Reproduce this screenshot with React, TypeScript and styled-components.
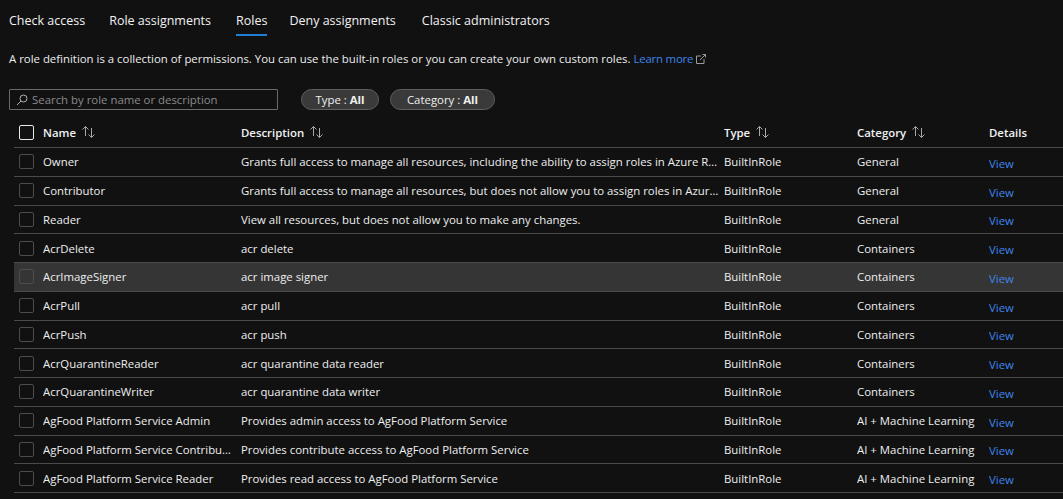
import React from 'react';
import styled, { createGlobalStyle } from 'styled-components';

const GlobalStyle = createGlobalStyle`
  html, body {
    margin: 0;
    height: 100%;
    background: #111112;
    overflow: hidden;
  }
  body {
    font-family: 'Open Sans', 'Noto Sans', sans-serif;
    font-size: 12px;
    color: #f0f0f0;
  }
`;

const roles = [
  { name: 'Owner', desc: 'Grants full access to manage all resources, including the ability to assign roles in Azure RBAC.', cat: 'General' },
  { name: 'Contributor', desc: 'Grants full access to manage all resources, but does not allow you to assign roles in Azure RBAC.', cat: 'General' },
  { name: 'Reader', desc: 'View all resources, but does not allow you to make any changes.', cat: 'General' },
  { name: 'AcrDelete', desc: 'acr delete', cat: 'Containers' },
  { name: 'AcrImageSigner', desc: 'acr image signer', cat: 'Containers', hover: true },
  { name: 'AcrPull', desc: 'acr pull', cat: 'Containers' },
  { name: 'AcrPush', desc: 'acr push', cat: 'Containers' },
  { name: 'AcrQuarantineReader', desc: 'acr quarantine data reader', cat: 'Containers' },
  { name: 'AcrQuarantineWriter', desc: 'acr quarantine data writer', cat: 'Containers' },
  { name: 'AgFood Platform Service Admin', desc: 'Provides admin access to AgFood Platform Service', cat: 'AI + Machine Learning' },
  { name: 'AgFood Platform Service Contributor', desc: 'Provides contribute access to AgFood Platform Service', cat: 'AI + Machine Learning' },
  { name: 'AgFood Platform Service Reader', desc: 'Provides read access to AgFood Platform Service', cat: 'AI + Machine Learning' },
];

const tabs = ['Check access', 'Role assignments', 'Roles', 'Deny assignments', 'Classic administrators'];

function SortIcon() {
  return (
    <SortSvg width="15" height="12" viewBox="0 0 15 12" fill="none" stroke="#a8a8a8" strokeWidth="1">
      <path d="M4.5 10V0.500M1.5 3.500l3-3 3 3" />
      <path d="M10.5 2v9.500M7.500 8.500l3 3 3-3" />
    </SortSvg>
  );
}

function App() {
  return (
    <Page>
      <GlobalStyle />
      <Tabs>
        {tabs.map((t) => (
          <Tab key={t} $active={t === 'Roles'}>{t}</Tab>
        ))}
      </Tabs>
      <Intro>
        A role definition is a collection of permissions. You can use the built-in roles or you can create your own custom roles.{' '}
        <LearnLink>Learn more</LearnLink>
        <ExternalIcon width="10" height="10" viewBox="0 0 10 10" fill="none" stroke="#9a9a9a" strokeWidth="1">
          <path d="M5 2H.5v7.500H8V5M4 6l5.500-5.500M6.500.5h3v3" />
        </ExternalIcon>
      </Intro>
      <Filters>
        <SearchBox>
          <svg width="12" height="12" viewBox="0 0 12 12" fill="none" stroke="#b0b0b0" strokeWidth="1">
            <circle cx="7.500" cy="4.500" r="3.500" />
            <path d="M5 7l-4 4" />
          </svg>
          <SearchText>Search by role name or description</SearchText>
        </SearchBox>
        <Pills>
          <Pill $width={78}>Type : <b>All</b></Pill>
          <Pill $width={105}>Category : <b>All</b></Pill>
        </Pills>
      </Filters>
      <Table>
        <HeaderRow>
          <CheckCell><Check $strong /></CheckCell>
          <HeadCell>Name <SortIcon /></HeadCell>
          <HeadCell>Description <SortIcon /></HeadCell>
          <HeadCell>Type <SortIcon /></HeadCell>
          <HeadCell>Category <SortIcon /></HeadCell>
          <HeadCell>Details</HeadCell>
        </HeaderRow>
        {roles.map((r) => (
          <Row key={r.name} $hover={r.hover}>
            <CheckCell><Check /></CheckCell>
            <Cell>{r.name}</Cell>
            <DescCell>{r.desc}</DescCell>
            <Cell>BuiltInRole</Cell>
            <Cell>{r.cat}</Cell>
            <ViewCell>View</ViewCell>
          </Row>
        ))}
      </Table>
    </Page>
  );
}

const Page = styled.div`
  width: 1063px;
  height: 499px;
  overflow: hidden;
  padding-top: 9px;
  box-sizing: border-box;
`;
const Tabs = styled.div`
  display: flex;
  gap: 24px;
  padding-left: 9px;
  height: 27px;
  & > :nth-child(3) { margin-left: 1px; }
  & > :nth-child(4) { margin-left: -2px; }
  & > :nth-child(5) { margin-left: 2px; }
`;
const Tab = styled.div<{ $active?: boolean }>`
  height: 27px;
  box-sizing: border-box;
  padding-top: 3px;
  font-size: 12.500px;
  line-height: 18px;
  color: #f2f2f2;
  border-bottom: 2px solid ${(p) => (p.$active ? '#1f7fd0' : 'transparent')};
`;
const Intro = styled.div`
  margin-top: 14px;
  padding-left: 9px;
  line-height: 18px;
  height: 18px;
  font-size: 11.400px;
  white-space: nowrap;
  color: #ececec;
`;
const LearnLink = styled.span`
  color: #3f85ea;
  letter-spacing: -0.2px;
`;
const ExternalIcon = styled.svg`
  margin-left: 3px;
  vertical-align: -1px;
`;
const Filters = styled.div`
  display: flex;
  align-items: center;
  margin-top: 21px;
  padding-left: 9px;
`;
const SearchBox = styled.div`
  width: 269px;
  height: 21px;
  box-sizing: border-box;
  display: flex;
  align-items: center;
  gap: 4px;
  padding-left: 6px;
  border: 1px solid #6a6a6a;
  border-radius: 1px;
`;
const SearchText = styled.span`
  color: #8a8a8a;
  font-size: 11.400px;
`;
const Pills = styled.div`
  display: flex;
  gap: 11px;
  margin-left: 23px;
`;
const Pill = styled.div<{ $width: number }>`
  width: ${(p) => p.$width}px;
  height: 21px;
  box-sizing: border-box;
  display: flex;
  align-items: center;
  justify-content: center;
  gap: 3px;
  background: #3a3a3a;
  border: 1px solid #5f5f5f;
  border-radius: 11px;
  font-size: 11.400px;
  b { font-weight: 700; }
`;
const Table = styled.div`
  margin: 8px 0 0 14px;
`;
const columns = `grid-template-columns: 29px 198px 483px 133px 132px 1fr;`;
const HeaderRow = styled.div`
  display: grid;
  ${columns}
  align-items: center;
  height: 30px;
  padding-bottom: 1px;
  border-bottom: 1px solid #4a4a4a;
  box-sizing: border-box;
`;
const Row = styled.div<{ $hover?: boolean }>`
  display: grid;
  ${columns}
  align-items: center;
  height: 28.750px;
  box-sizing: border-box;
  border-bottom: 1px solid #4a4a4a;
  background: ${(p) => (p.$hover ? '#353535' : 'transparent')};
`;
const CheckCell = styled.div`
  padding-left: 5px;
  display: flex;
  align-items: center;
`;
const Check = styled.div<{ $strong?: boolean }>`
  width: 15px;
  height: 15px;
  box-sizing: border-box;
  border: 1px solid ${(p) => (p.$strong ? '#e8e8e8' : '#4c4c4c')};
  border-radius: 2px;
`;
const Cell = styled.div`
  padding-right: 8px;
  font-size: 11.400px;
  white-space: nowrap;
  overflow: hidden;
  text-overflow: ellipsis;
  color: #eeeeee;
`;
const DescCell = styled(Cell)`
  padding-right: 5px;
`;
const HeadCell = styled(Cell)`
  font-weight: 600;
  color: #f2f2f2;
  display: flex;
  align-items: center;
  gap: 5px;
`;
const SortSvg = styled.svg`
  flex: none;
`;
const ViewCell = styled(Cell)`
  color: #3f85ea;
  padding-top: 3px;
`;

export default App;
